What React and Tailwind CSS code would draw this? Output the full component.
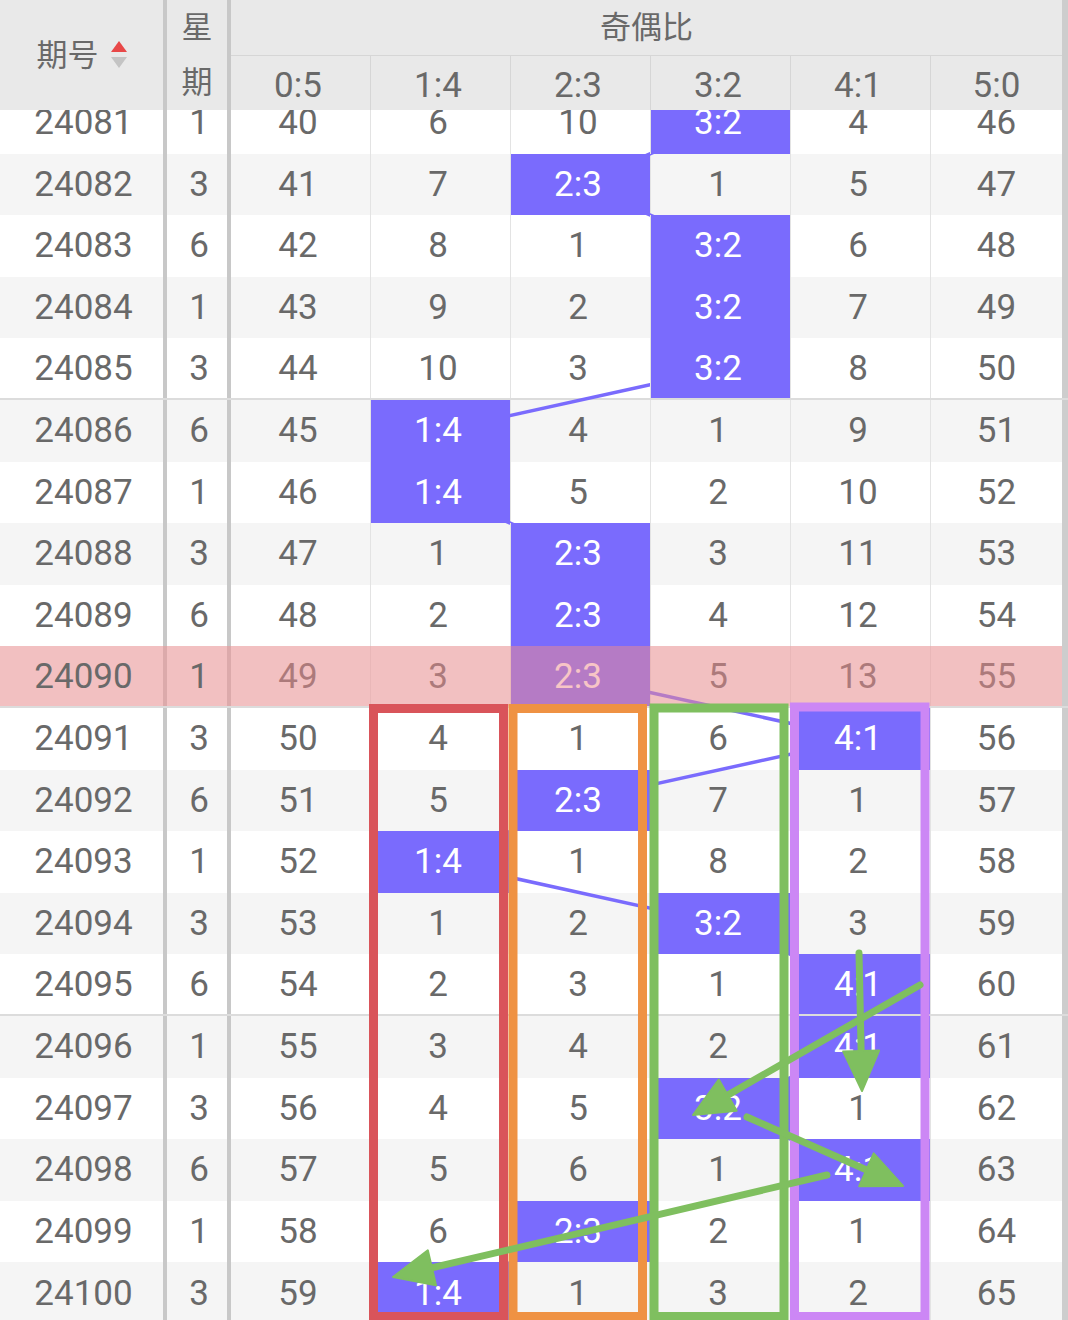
import React from 'react'

const RATIOS = ['0:5', '1:4', '2:3', '3:2', '4:1', '5:0']
const ROW_H = 61.6

// null marks the ratio that came out in that draw
const ROWS = [
  ['24081', 1, [40, 6, 10, null, 4, 46]],
  ['24082', 3, [41, 7, null, 1, 5, 47]],
  ['24083', 6, [42, 8, 1, null, 6, 48]],
  ['24084', 1, [43, 9, 2, null, 7, 49]],
  ['24085', 3, [44, 10, 3, null, 8, 50]],
  ['24086', 6, [45, null, 4, 1, 9, 51]],
  ['24087', 1, [46, null, 5, 2, 10, 52]],
  ['24088', 3, [47, 1, null, 3, 11, 53]],
  ['24089', 6, [48, 2, null, 4, 12, 54]],
  ['24090', 1, [49, 3, null, 5, 13, 55]],
  ['24091', 3, [50, 4, 1, 6, null, 56]],
  ['24092', 6, [51, 5, null, 7, 1, 57]],
  ['24093', 1, [52, null, 1, 8, 2, 58]],
  ['24094', 3, [53, 1, 2, null, 3, 59]],
  ['24095', 6, [54, 2, 3, 1, null, 60]],
  ['24096', 1, [55, 3, 4, 2, null, 61]],
  ['24097', 3, [56, 4, 5, null, 1, 62]],
  ['24098', 6, [57, 5, 6, 1, null, 63]],
  ['24099', 1, [58, 6, null, 2, 1, 64]],
  ['24100', 3, [59, null, 1, 3, 2, 65]],
]

const COL_W = [
  'w-[139px] pr-[5px]',
  'w-[140px] pr-[5px] border-l border-[#e3e3e3]',
  'w-[140px] pr-[5px] border-l border-[#e3e3e3]',
  'w-[140px] pr-[5px] border-l border-[#e3e3e3]',
  'w-[140px] pr-[5px] border-l border-[#e3e3e3]',
  'w-[132px] border-l border-[#e3e3e3]',
]
const HEAD_W = [
  'w-[139px] pr-[5px]',
  'w-[140px] pr-[5px] border-l border-[#d6d6d6]',
  'w-[140px] pr-[5px] border-l border-[#d6d6d6]',
  'w-[140px] pr-[5px] border-l border-[#d6d6d6]',
  'w-[140px] pr-[5px] border-l border-[#d6d6d6]',
  'w-[132px] border-l border-[#d6d6d6]',
]
const COL_X = [300.5, 440.5, 580.5, 720.5, 860.5, 996]
const PINK_ROW = 9
const GROUP_END = [4, 9, 14]
// the 24098 -> 24099 link sits under the green arrow in the picture
const HIDDEN_LINKS = [17]

function SortIcon() {
  return (
    <svg width="16" height="28" viewBox="0 0 16 28">
      <polygon points="8,0 16,11 0,11" fill="#e84848" />
      <polygon points="0,16 16,16 8,27" fill="#c4c4c4" />
    </svg>
  )
}

function Arrow({ x1, y1, x2, y2 }) {
  const len = Math.hypot(x2 - x1, y2 - y1)
  const ux = (x2 - x1) / len
  const uy = (y2 - y1) / len
  const bx = x2 - ux * 40
  const by = y2 - uy * 40
  const pts = [
    [x2, y2],
    [bx - uy * 18, by + ux * 18],
    [bx + uy * 18, by - ux * 18],
  ]
  return (
    <g>
      <line x1={x1} y1={y1} x2={bx + ux * 4} y2={by + uy * 4} stroke="#7fbf5f" strokeWidth="7" strokeLinecap="round" />
      <polygon points={pts.map(p => p.join(',')).join(' ')} fill="#7fbf5f" stroke="#7fbf5f" strokeWidth="2" strokeLinejoin="round" />
    </g>
  )
}

function Row({ row, i }) {
  const [no, wk, vals] = row
  const pink = i === PINK_ROW
  const stripe = i % 2 === 0 ? 'bg-white' : 'bg-[#f5f5f5]'
  const sep = GROUP_END.includes(i) ? 'border-b-2 border-[#dcdcdc]' : ''
  return (
    <div className={`relative flex h-[61.6px] ${stripe} ${sep}`}>
      <div className="flex w-[167px] items-center justify-center border-r-4 border-[#c8c8c8] pl-1">
        <span className="relative z-40">{no}</span>
      </div>
      <div className="flex w-[64px] items-center justify-center border-r-4 border-[#c8c8c8] pl-1">
        <span className="relative z-40">{wk}</span>
      </div>
      {vals.map((v, c) =>
        v === null ? (
          <div key={c} className={`relative z-20 flex items-center justify-center bg-[#7a6bfd] text-white ${COL_W[c]}`}>
            {RATIOS[c]}
          </div>
        ) : (
          <div key={c} className={`flex items-center justify-center ${COL_W[c]}`}>
            {v}
          </div>
        )
      )}
      <div className="w-[6px] bg-[#cdcdcd]" />
      {pink && <div className="absolute inset-y-0 left-0 right-[6px] z-30 bg-[rgba(239,139,141,0.5)]" />}
    </div>
  )
}

export default function App() {
  const hits = ROWS.map((r, i) => [COL_X[r[2].indexOf(null)], i * ROW_H + ROW_H / 2])

  return (
    <div className="h-[1320px] w-[1068px] overflow-hidden bg-white font-['Roboto','Noto_Sans_CJK_SC',sans-serif] text-[35px] leading-none text-[#696969]">
      {/* header */}
      <div className="relative z-10 flex h-[110px] bg-[#e9e9e9]">
        <div className="flex w-[167px] items-center justify-center gap-3 border-r-4 border-[#c8c8c8] text-[31px]">
          <span>期号</span>
          <SortIcon />
        </div>
        <div className="flex w-[64px] flex-col border-r-4 border-[#c8c8c8] text-[31px]">
          <div className="flex h-[55px] items-center justify-center">星</div>
          <div className="flex flex-1 items-center justify-center">期</div>
        </div>
        <div className="flex w-[831px] flex-col">
          <div className="flex h-[56px] items-center justify-center border-b border-[#d6d6d6] text-[31px]">奇偶比</div>
          <div className="flex flex-1">
            {RATIOS.map((r, c) => (
              <div key={r} className={`flex items-center justify-center pt-1 ${HEAD_W[c]}`}>{r}</div>
            ))}
          </div>
        </div>
        <div className="w-[6px] bg-[#cdcdcd]" />
      </div>

      {/* body, scrolled a little under the header */}
      <div className="relative isolate -mt-[18px]">
        {ROWS.map((row, i) => (
          <Row key={row[0]} row={row} i={i} />
        ))}

        <svg className="pointer-events-none absolute inset-0 z-10" width="1068" height="1232" viewBox="0 0 1068 1232">
          {hits.slice(1).map((p, i) =>
            HIDDEN_LINKS.includes(i) ? null : (
              <line key={i} x1={hits[i][0]} y1={hits[i][1]} x2={p[0]} y2={p[1]} stroke="#7a6bfd" strokeWidth="3.5" />
            )
          )}
        </svg>

        <svg className="pointer-events-none absolute inset-0 z-50" width="1068" height="1232" viewBox="0 0 1068 1232">
          <g fill="none" strokeWidth="9">
            <rect x="373.5" y="616.5" width="130" height="608" stroke="#d9545a" />
            <rect x="513" y="616.5" width="129.5" height="608" stroke="#ef9243" />
            <rect x="654" y="616" width="130" height="608.5" stroke="#7fbf5f" />
            <rect x="794.5" y="615" width="130.5" height="609.5" stroke="#cc87f5" />
          </g>
          <Arrow x1={859} y1={861} x2={862} y2={999} />
          <Arrow x1={920} y1={893} x2={693} y2={1023} />
          <Arrow x1={747} y1={1025} x2={903} y2={1094} />
          <Arrow x1={827} y1={1083} x2={393} y2={1185} />
        </svg>
      </div>
    </div>
  )
}
